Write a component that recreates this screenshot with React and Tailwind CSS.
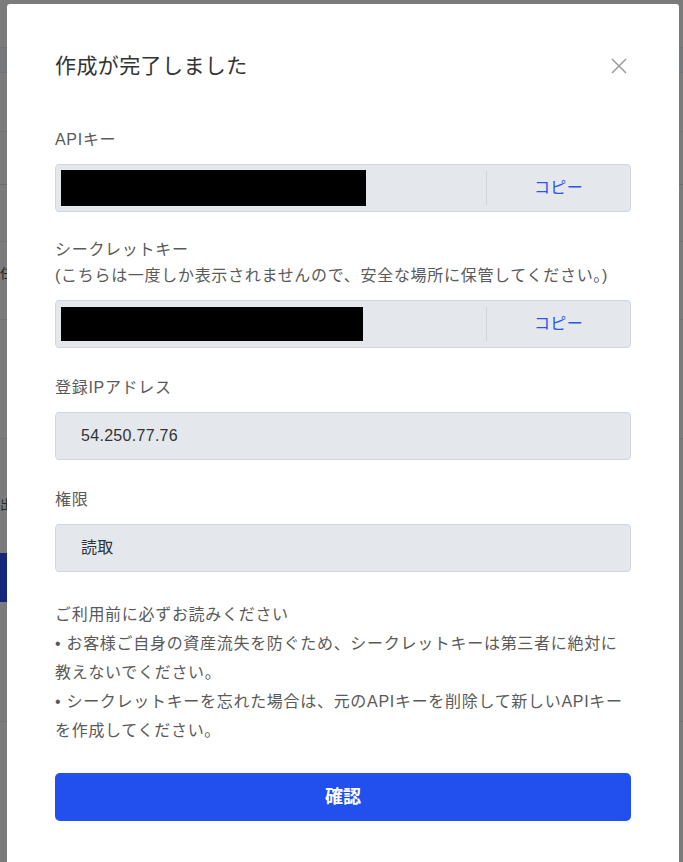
import React from "react";

function KeyField({ redactWidth, redactHeight }) {
  return (
    <div className="flex h-[48px] items-stretch rounded-[4px] border border-[#cfd8e1] bg-[#e4e8ed]">
      <div className="flex flex-1 items-center pl-[5px]">
        <div className="bg-black" style={{ width: redactWidth, height: redactHeight }} />
      </div>
      <div className="my-[6px] w-px bg-[#cdd6df]" />
      <button type="button" className="w-[143px] text-[16px] tracking-[0.3px] text-[#2a55e5]">
        コピー
      </button>
    </div>
  );
}

function ValueField({ children }) {
  return (
    <div className="flex h-[48px] items-center rounded-[4px] border border-[#cfd8e1] bg-[#e4e8ed] pl-[25px] text-[16px] tracking-[0.3px] text-[#333]">
      {children}
    </div>
  );
}

function Label({ children }) {
  return <div className="mb-[11px] text-[16px] leading-[26px] tracking-[0.7px] text-[#5a5a5a]">{children}</div>;
}

function App() {
  return (
    <div className="relative h-[862px] w-full overflow-hidden bg-[#7b7b7b] font-['Liberation_Sans','Noto_Sans_CJK_JP',sans-serif]">
      {/* dimmed page behind the overlay */}
      <div className="flex flex-col">
        <div className="h-[48px] border-b border-[#6f7276]" />
        <div className="h-[25px] border-b border-[#6f7276] bg-[#76787c]" />
        <div className="h-[59px] border-b border-[#6f7276]" />
        <div className="h-[53px] border-b border-[#6a6d72]" />
        <div className="h-[57px] border-b border-[#6f7276]" />
        <div className="h-[78px] border-b border-[#6f7276] pt-[18px] text-[13px] leading-[28px] text-[#222]">
          <div>任</div>
        </div>
        <div className="h-[119px] border-b border-[#6f7276]" />
        <div className="h-[114px] pt-[56px] text-[13px] text-[#2a2a2a]">出</div>
        <div className="h-[49px] w-[200px] bg-[#16267c]" />
        <div className="h-[120px] border-b border-[#6f7276]" />
      </div>

      <div className="absolute left-[7px] top-[4px] w-[672px] rounded-[3px] bg-white px-[48px] pt-[48px] pb-[48px]">
        <div className="flex h-[28px] items-center justify-between">
          <h2 className="text-[21px] tracking-[0.4px] text-[#333]">作成が完了しました</h2>
          <button type="button" className="flex h-[24px] w-[24px] items-center justify-center">
            <svg width="16" height="16" viewBox="0 0 16 16" fill="none" stroke="#9b9ca3" strokeWidth="1.5">
              <path d="M1 1L15 15M15 1L1 15" />
            </svg>
          </button>
        </div>

        <div className="mt-[47px]">
          <Label>APIキー</Label>
          <KeyField redactWidth={305} redactHeight={36} />
        </div>

        <div className="mt-[25px]">
          <Label>
            シークレットキー
            <br />
            (こちらは一度しか表示されませんので、安全な場所に保管してください。)
          </Label>
          <KeyField redactWidth={302} redactHeight={34} />
        </div>

        <div className="mt-[27px]">
          <Label>登録IPアドレス</Label>
          <ValueField>54.250.77.76</ValueField>
        </div>

        <div className="mt-[27px]">
          <Label>権限</Label>
          <ValueField>読取</ValueField>
        </div>

        <div className="mt-[28px] text-[16px] leading-[29px] tracking-[0.7px] text-[#5a5a5a]">
          <p>ご利用前に必ずお読みください</p>
          <p>• お客様ご自身の資産流失を防ぐため、シークレットキーは第三者に絶対に教えないでください。</p>
          <p>• シークレットキーを忘れた場合は、元のAPIキーを削除して新しいAPIキーを作成してください。</p>
        </div>

        <button
          type="button"
          className="mt-[28px] h-[48px] w-full rounded-[5px] bg-[#2250ee] text-[18px] font-bold text-white"
        >
          確認
        </button>
      </div>
    </div>
  );
}

export default App;
